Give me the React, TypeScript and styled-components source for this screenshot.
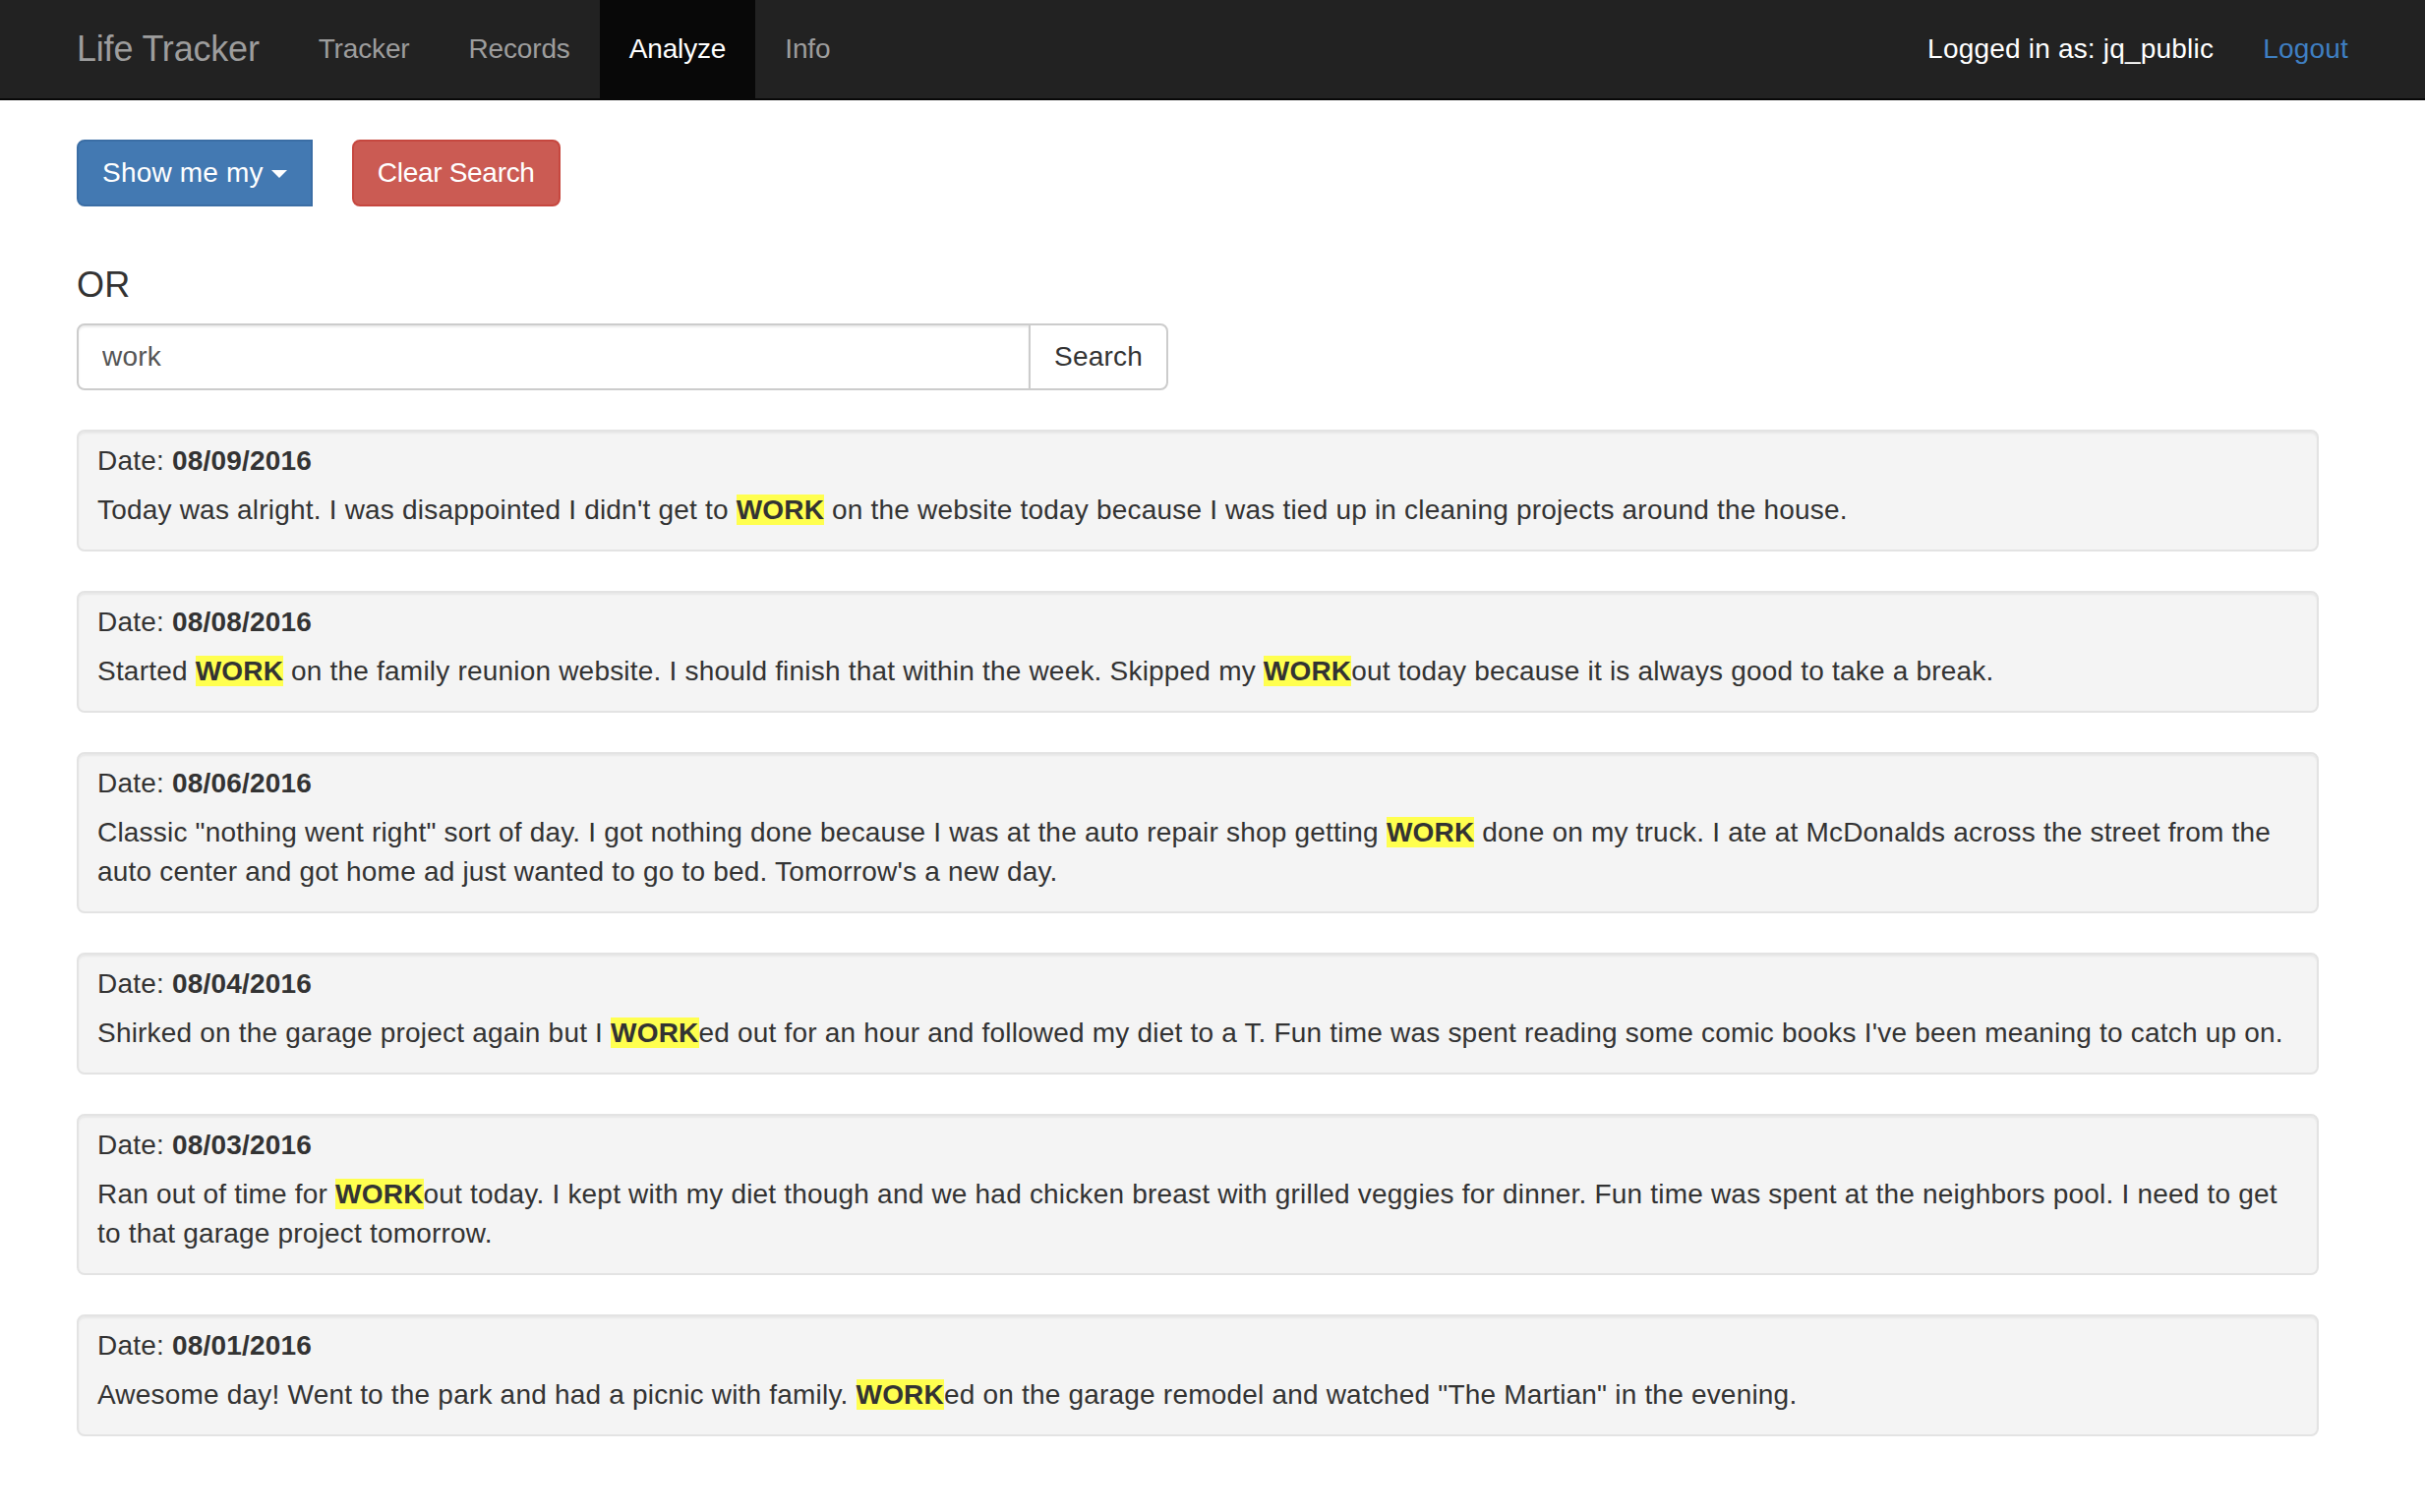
import React from "react";
import styled, { createGlobalStyle } from "styled-components";

const GlobalStyle = createGlobalStyle`
  html, body { margin: 0; padding: 0; background: #ffffff; }
  body {
    font-family: "Liberation Sans", Arial, Helvetica, sans-serif;
    font-size: 28px;
    line-height: 40px;
    letter-spacing: 0.2px;
    color: #333333;
  }
  * { box-sizing: border-box; }
`;

const Navbar = styled.nav`
  height: 102px;
  background: #222222;
  border-bottom: 2px solid #080808;
`;

const NavInner = styled.div`
  display: flex;
  align-items: stretch;
  height: 100px;
  padding: 0 78px 0 48px;
`;

const Brand = styled.a`
  display: block;
  padding: 30px;
  font-size: 36px;
  line-height: 40px;
  letter-spacing: -0.2px;
  color: #9d9d9d;
  text-decoration: none;
`;

const NavList = styled.ul`
  display: flex;
  list-style: none;
  margin: 0;
  padding: 0;
`;

const NavLink = styled.a<{ $active?: boolean }>`
  display: block;
  padding: 30px;
  line-height: 40px;
  font-size: 28px;
  letter-spacing: -0.15px;
  text-decoration: none;
  color: ${(p) => (p.$active ? "#ffffff" : "#9d9d9d")};
  background: ${(p) => (p.$active ? "#080808" : "transparent")};
`;

const NavRight = styled.div`
  margin-left: auto;
  display: flex;
  align-items: center;
  gap: 50px;
`;

const NavText = styled.span`
  color: #ffffff;
  line-height: 40px;
`;

const LogoutLink = styled.a`
  color: #3f7fc2;
  text-decoration: none;
  line-height: 40px;
`;

const Main = styled.main`
  padding: 40px 78px 40px 78px;
`;

const ButtonRow = styled.div`
  display: flex;
  gap: 40px;
  height: 68px;
`;

const Button = styled.button<{ $variant: "primary" | "danger" | "default"; $squareRight?: boolean }>`
  display: inline-flex;
  align-items: center;
  height: 68px;
  padding: 12px 24px;
  font-family: inherit;
  font-size: 28px;
  line-height: 40px;
  letter-spacing: 0.2px;
  border: 2px solid;
  border-radius: ${(p) => (p.$squareRight ? "8px 0 0 8px" : "8px")};
  cursor: pointer;
  ${(p) =>
    p.$variant === "primary"
      ? `background: #4379b2; border-color: #3b6ea5; color: #ffffff;`
      : p.$variant === "danger"
      ? `background: #cb5b53; border-color: #c6473f; color: #ffffff; letter-spacing: -0.3px;`
      : `background: #ffffff; border-color: #cccccc; color: #333333;`}
`;

const Caret = styled.span`
  display: inline-block;
  width: 0;
  height: 0;
  margin-left: 8px;
  margin-top: 2px;
  border-top: 8px solid #ffffff;
  border-left: 8px solid transparent;
  border-right: 8px solid transparent;
`;

const OrHeading = styled.h4`
  margin: 60px 0 19px;
  font-size: 36px;
  line-height: 40px;
  font-weight: 500;
  color: #333333;
`;

const InputGroup = styled.div`
  display: flex;
  width: 1110px;
  height: 68px;
`;

const SearchInput = styled.input`
  flex: 1;
  min-width: 0;
  height: 68px;
  padding: 12px 24px;
  font-family: inherit;
  font-size: 28px;
  letter-spacing: 0.2px;
  color: #555555;
  border: 2px solid #cccccc;
  border-radius: 8px 0 0 8px;
  box-shadow: inset 0 2px 2px rgba(0, 0, 0, 0.075);
  outline: none;
`;

const SearchButton = styled(Button)`
  margin-left: -2px;
  border-radius: 0 8px 8px 0;
`;

const Results = styled.div`
  margin-top: 40px;
  display: flex;
  flex-direction: column;
  gap: 40px;
`;

const Well = styled.div`
  width: 2280px;
  padding: 10px 18px 20px 19px;
  background: #f4f4f4;
  border: 2px solid #e3e3e3;
  border-radius: 8px;
  box-shadow: inset 0 2px 2px rgba(0, 0, 0, 0.05);
`;

const DateLine = styled.div`
  line-height: 40px;
  margin-bottom: 10px;
`;

const Body = styled.div`
  line-height: 40px;
`;

const Mark = styled.span`
  background: #ffff4f;
  font-weight: bold;
`;

type Entry = { date: string; parts: (string | { hl: string })[] };

const entries: Entry[] = [
  {
    date: "08/09/2016",
    parts: [
      "Today was alright. I was disappointed I didn't get to ",
      { hl: "WORK" },
      " on the website today because I was tied up in cleaning projects around the house.",
    ],
  },
  {
    date: "08/08/2016",
    parts: [
      "Started ",
      { hl: "WORK" },
      " on the family reunion website. I should finish that within the week. Skipped my ",
      { hl: "WORK" },
      "out today because it is always good to take a break.",
    ],
  },
  {
    date: "08/06/2016",
    parts: [
      'Classic "nothing went right" sort of day. I got nothing done because I was at the auto repair shop getting ',
      { hl: "WORK" },
      " done on my truck. I ate at McDonalds across the street from the auto center and got home ad just wanted to go to bed. Tomorrow's a new day.",
    ],
  },
  {
    date: "08/04/2016",
    parts: [
      "Shirked on the garage project again but I ",
      { hl: "WORK" },
      "ed out for an hour and followed my diet to a T. Fun time was spent reading some comic books I've been meaning to catch up on.",
    ],
  },
  {
    date: "08/03/2016",
    parts: [
      "Ran out of time for ",
      { hl: "WORK" },
      "out today. I kept with my diet though and we had chicken breast with grilled veggies for dinner. Fun time was spent at the neighbors pool. I need to get to that garage project tomorrow.",
    ],
  },
  {
    date: "08/01/2016",
    parts: [
      "Awesome day! Went to the park and had a picnic with family. ",
      { hl: "WORK" },
      'ed on the garage remodel and watched "The Martian" in the evening.',
    ],
  },
];

export default function App() {
  return (
    <>
      <GlobalStyle />
      <Navbar>
        <NavInner>
          <Brand href="#">Life Tracker</Brand>
          <NavList>
            <li><NavLink href="#">Tracker</NavLink></li>
            <li><NavLink href="#">Records</NavLink></li>
            <li><NavLink href="#" $active>Analyze</NavLink></li>
            <li><NavLink href="#">Info</NavLink></li>
          </NavList>
          <NavRight>
            <NavText>Logged in as: jq_public</NavText>
            <LogoutLink href="#">Logout</LogoutLink>
          </NavRight>
        </NavInner>
      </Navbar>
      <Main>
        <ButtonRow>
          <Button $variant="primary" $squareRight>
            Show me my <Caret />
          </Button>
          <Button $variant="danger">Clear Search</Button>
        </ButtonRow>
        <OrHeading>OR</OrHeading>
        <InputGroup>
          <SearchInput defaultValue="work" />
          <SearchButton $variant="default">Search</SearchButton>
        </InputGroup>
        <Results>
          {entries.map((e) => (
            <Well key={e.date}>
              <DateLine>
                Date: <b>{e.date}</b>
              </DateLine>
              <Body>
                {e.parts.map((p, i) =>
                  typeof p === "string" ? <React.Fragment key={i}>{p}</React.Fragment> : <Mark key={i}>{p.hl}</Mark>
                )}
              </Body>
            </Well>
          ))}
        </Results>
      </Main>
    </>
  );
}
